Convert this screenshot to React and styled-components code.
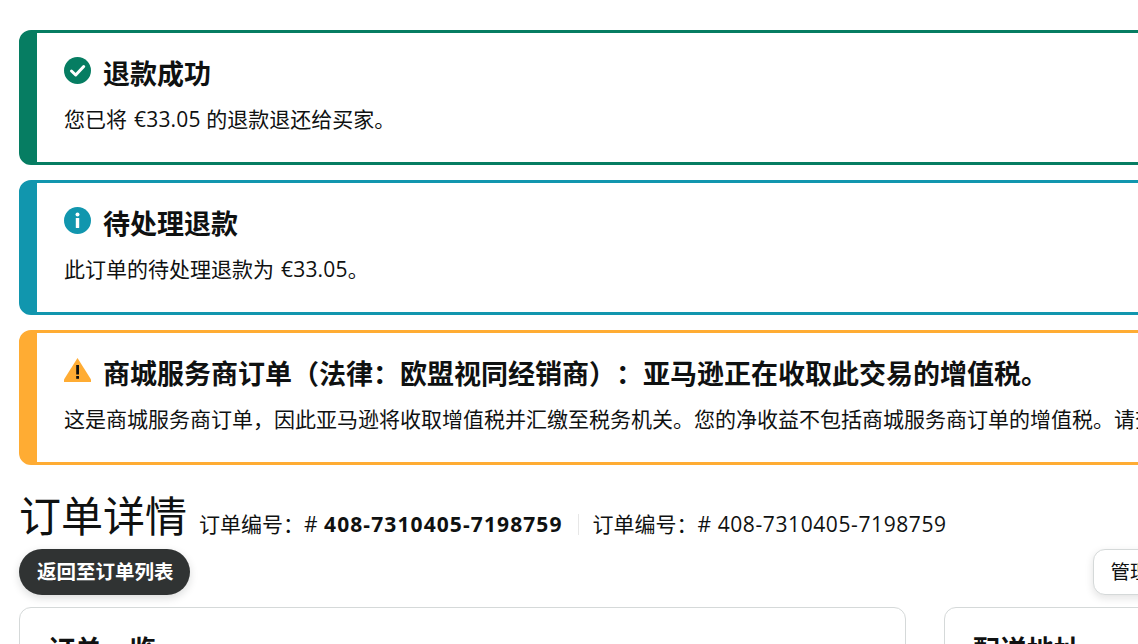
import React from 'react';
import styled, { createGlobalStyle } from 'styled-components';

const FONT = '"Open Sans", "Noto Sans CJK SC", sans-serif';

const COLORS = {
  success: '#067d62',
  info: '#1196ae',
  warning: '#ffac33',
};

const GlobalStyle = createGlobalStyle`
  html, body {
    margin: 0;
    height: 644px;
    overflow: hidden;
    background: #fff;
  }
  body {
    font-family: ${FONT};
    color: #0f1111;
    text-spacing-trim: space-all;
  }
`;

const Page = styled.div`
  width: 1283px;
  padding: 30px 19px 0;
  box-sizing: border-box;
`;

const AlertStack = styled.div`
  display: flex;
  flex-direction: column;
  gap: 15px;
`;

const AlertBox = styled.div`
  height: 135px;
  box-sizing: border-box;
  border: 3px solid ${(p) => p.$color};
  border-left-width: 18px;
  border-radius: 12px;
  padding: 21px 0 0 27px;
`;

const AlertHead = styled.div`
  display: flex;
  align-items: flex-start;
  gap: 12px;
`;

const IconSlot = styled.div`
  width: 27px;
  height: 27px;
  flex: none;
  margin-top: 3px;
  svg {
    display: block;
  }
`;

const AlertTitle = styled.h4`
  margin: 0;
  font-size: 27px;
  line-height: 39px;
  font-weight: 700;
  white-space: nowrap;
`;

const AlertText = styled.p`
  margin: 11px 0 0;
  font-size: 21px;
  line-height: 30px;
  white-space: nowrap;
`;

const Amount = styled.span`
  margin-left: 1.5px;
  letter-spacing: 0.2px;
`;

const TitleRow = styled.div`
  display: flex;
  align-items: baseline;
  margin-top: 20px;
  height: 64px;
`;

const PageTitle = styled.h1`
  margin: 0 12px 0 0;
  font-size: 42px;
  line-height: 61px;
  font-weight: 400;
`;

const OrderNo = styled.span`
  font-size: 21px;
  line-height: 30px;
`;

const OrderValue = styled.span`
  margin-left: 1px;
  font-weight: ${(p) => (p.$strong ? 700 : 400)};
  letter-spacing: ${(p) => (p.$strong ? '1.1px' : '0.6px')};
`;

const Divider = styled.span`
  display: inline-block;
  width: 1px;
  height: 21px;
  background: #e7e7e7;
  margin: 0 14px 0 15px;
  align-self: center;
  position: relative;
  top: 7px;
`;

const ActionRow = styled.div`
  display: flex;
  justify-content: space-between;
  align-items: center;
  height: 46px;
`;

const BackButton = styled.button`
  height: 46px;
  padding: 0 16px 0 18px;
  border: 0;
  border-radius: 23px;
  background: #303333;
  color: #fff;
  font: 700 19.5px/28px ${FONT};
  box-shadow: 0 3px 8px rgba(15, 17, 17, 0.15);
`;

const GhostButton = styled.button`
  height: 46px;
  padding: 0 16px;
  border: 1.5px solid #d5d9d9;
  border-radius: 12px;
  background: #fff;
  color: #0f1111;
  font: 400 19.5px/28px ${FONT};
  box-shadow: 0 3px 8px rgba(15, 17, 17, 0.12);
  white-space: nowrap;
`;

const CardGrid = styled.div`
  display: grid;
  grid-template-columns: 887px 1fr;
  gap: 38px;
  margin-top: 12px;
`;

const Card = styled.section`
  height: 200px;
  box-sizing: border-box;
  border: 1.5px solid #d5d9d9;
  border-radius: 12px;
  padding: 22px 28px;
`;

const CardTitle = styled.h2`
  margin: 0;
  font-size: 27px;
  line-height: 39px;
  font-weight: 700;
`;

const CheckIcon = () => (
  <svg width="27" height="27" viewBox="0 0 27 27">
    <circle cx="13.5" cy="13.5" r="13.5" fill={COLORS.success} />
    <path d="M7.5 14l4.2 4 8-8.5" fill="none" stroke="#fff" strokeWidth="3" strokeLinecap="round" strokeLinejoin="round" />
  </svg>
);

const InfoIcon = () => (
  <svg width="27" height="27" viewBox="0 0 27 27">
    <circle cx="13.5" cy="13.5" r="13.5" fill={COLORS.info} />
    <rect x="11.8" y="11" width="3.4" height="10" rx="0.6" fill="#fff" />
    <circle cx="13.5" cy="7.6" r="2" fill="#fff" />
  </svg>
);

const WarnIcon = () => (
  <svg width="27" height="27" viewBox="0 0 27 27">
    <path d="M13.5 1 L27 22.6 V25 H0 V22.6 Z" fill={COLORS.warning} />
    <rect x="12.2" y="8" width="2.8" height="9.5" fill="#0f1111" />
    <rect x="12.2" y="19" width="2.8" height="2.8" fill="#0f1111" />
  </svg>
);

const alerts = [
  {
    color: COLORS.success,
    icon: <CheckIcon />,
    title: '退款成功',
    text: (
      <>
        您已将 <Amount>€33.05</Amount> 的退款退还给买家。
      </>
    ),
  },
  {
    color: COLORS.info,
    icon: <InfoIcon />,
    title: '待处理退款',
    text: (
      <>
        此订单的待处理退款为 <Amount>€33.05</Amount>。
      </>
    ),
  },
  {
    color: COLORS.warning,
    icon: <WarnIcon />,
    title: '商城服务商订单（法律：欧盟视同经销商）：亚马逊正在收取此交易的增值税。',
    text: '这是商城服务商订单，因此亚马逊将收取增值税并汇缴至税务机关。您的净收益不包括商城服务商订单的增值税。请查看详情。',
  },
];

const App = () => (
  <Page>
    <GlobalStyle />
    <AlertStack>
      {alerts.map((a) => (
        <AlertBox key={a.title} $color={a.color}>
          <AlertHead>
            <IconSlot>{a.icon}</IconSlot>
            <AlertTitle>{a.title}</AlertTitle>
          </AlertHead>
          <AlertText>{a.text}</AlertText>
        </AlertBox>
      ))}
    </AlertStack>
    <TitleRow>
      <PageTitle>订单详情</PageTitle>
      <OrderNo>
        订单编号：# <OrderValue $strong>408-7310405-7198759</OrderValue>
      </OrderNo>
      <Divider />
      <OrderNo>
        订单编号：# <OrderValue>408-7310405-7198759</OrderValue>
      </OrderNo>
    </TitleRow>
    <ActionRow>
      <BackButton>返回至订单列表</BackButton>
      <GhostButton>管理退货和退款</GhostButton>
    </ActionRow>
    <CardGrid>
      <Card>
        <CardTitle>订单一览</CardTitle>
      </Card>
      <Card>
        <CardTitle>配送地址</CardTitle>
      </Card>
    </CardGrid>
  </Page>
);

export default App;
